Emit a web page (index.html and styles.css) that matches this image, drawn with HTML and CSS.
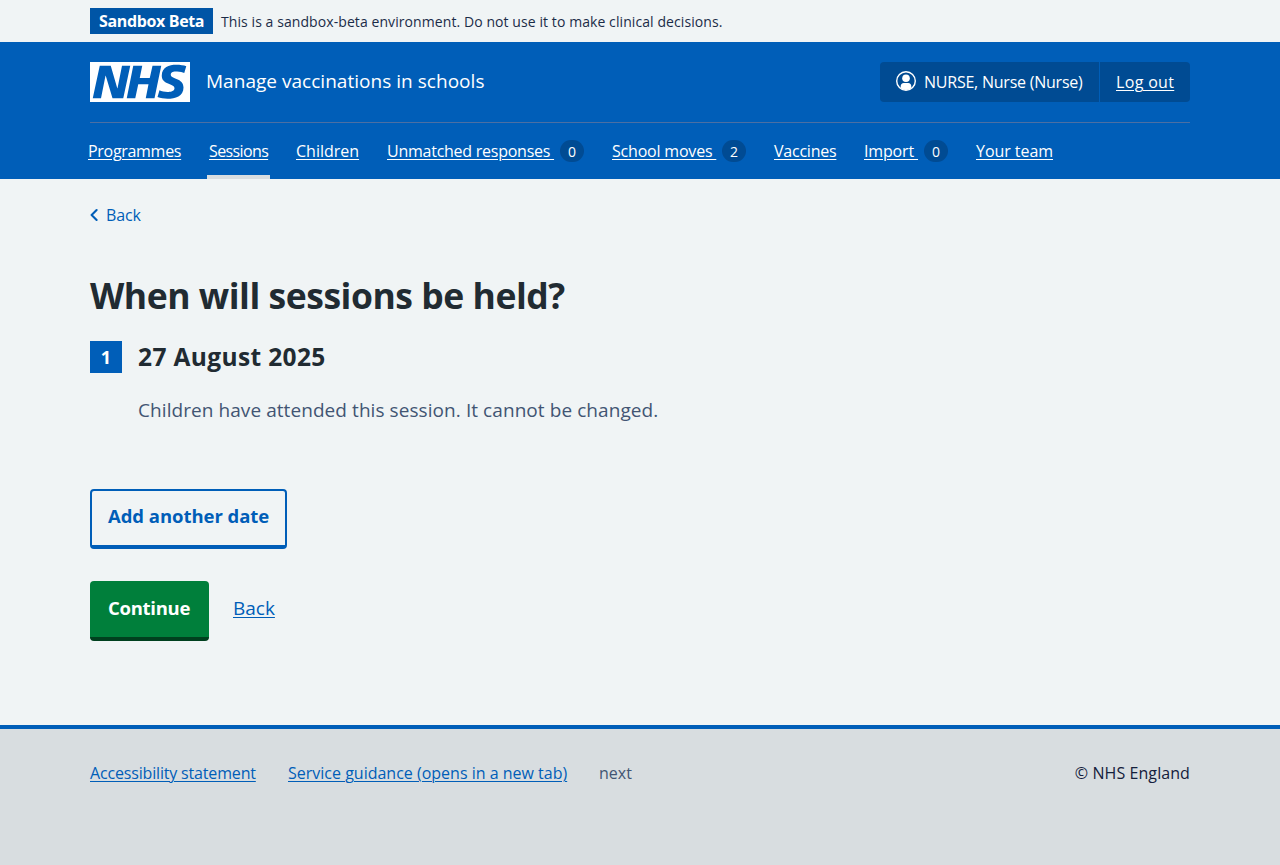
FILE: index.html
```html
<!DOCTYPE html>
<html lang="en">
<head>
<meta charset="utf-8">
<title>When will sessions be held?</title>
<link rel="stylesheet" href="styles.css">
</head>
<body>
<div class="environment"><div class="container environment-inner">
  <strong class="tag"><span>Sandbox Beta</span></strong><span class="environment-text">This is a sandbox-beta environment. Do not use it to make clinical decisions.</span>
</div></div>
<header class="header"><div class="container">
  <div class="header-top">
    <a class="service" href="#">
      <svg class="logo" viewBox="0 0 40 16" role="img" aria-label="NHS"><path fill="#fff" d="M0 0h40v16H0z"/><path fill="#005eb8" d="M3.9 1.5h4.4l2.6 9h.1l1.8-9h3.3l-2.8 13H9l-2.7-9h-.1l-1.8 9H1.1M17.3 1.5h3.6l-1 4.9h4L25 1.5h3.5l-2.7 13h-3.5l1.1-5.6h-4.1l-1.2 5.6h-3.4M37.7 4.4c-.7-.3-1.6-.6-2.9-.6-1.4 0-2.5.2-2.5 1.3 0 1.8 5.1 1.2 5.1 5.1 0 3.6-3.3 4.5-6.4 4.5-1.3 0-2.9-.3-4-.7l.8-2.7c.7.4 2.1.7 3.2.7s2.8-.2 2.8-1.5c0-2.1-5.1-1.3-5.1-5 0-3.4 2.9-4.4 5.8-4.4 1.6 0 3.1.2 4 .6"/></svg>
      <span class="service-name">Manage vaccinations in schools</span>
    </a>
    <div class="account">
      <div class="account-user">
        <svg class="user-icon" viewBox="0 0 20 20" aria-hidden="true"><circle cx="10" cy="10" r="9.3" fill="none" stroke="#fff" stroke-width="1.4"/><circle cx="10" cy="7.3" r="3.8" fill="#fff"/><path fill="#fff" d="M4.7 17v-1.8c0-1.900 1.200-3.200 3.100-3.200h4.400c1.900 0 3.100 1.300 3.100 3.200V17c-1.500 1.200-3.200 2-5.300 2s-3.800-.8-5.300-2z"/></svg>
        <span class="account-name">NURSE, Nurse (Nurse)</span>
      </div>
      <div class="account-out"><a class="logout" href="#">Log out</a></div>
    </div>
  </div>
  <nav class="nav">
    <a class="nav-link programmes" href="#"><span>Programmes</span></a>
    <a class="nav-link sessions current" href="#"><span>Sessions</span></a>
    <a class="nav-link children" href="#"><span>Children</span></a>
    <a class="nav-link unmatched" href="#"><span>Unmatched responses </span><b class="count">0</b></a>
    <a class="nav-link moves" href="#"><span>School moves </span><b class="count">2</b></a>
    <a class="nav-link vaccines" href="#"><span>Vaccines</span></a>
    <a class="nav-link import" href="#"><span>Import </span><b class="count">0</b></a>
    <a class="nav-link team" href="#"><span>Your team</span></a>
  </nav>
</div></header>
<main class="container main">
  <a class="back" href="#"><svg class="chevron" viewBox="0 0 8 14" aria-hidden="true"><path d="M6.600 2 1.600 7l5 5" fill="none" stroke="#005eb8" stroke-width="2.100" stroke-linecap="round" stroke-linejoin="round"/></svg><span class="back-text">Back</span></a>
  <h1 class="title">When will sessions be held?</h1>
  <div class="date-row"><span class="number">1</span><h2 class="date">27 August 2025</h2></div>
  <p class="hint"><span>Children have attended this session. It cannot be changed.</span></p>
  <button class="button secondary"><span>Add another date</span></button>
  <div class="actions"><button class="button primary"><span>Continue</span></button><a class="cancel" href="#">Back</a></div>
</main>
<footer class="footer"><div class="container footer-inner">
  <a class="statement" href="#">Accessibility statement</a><a class="guidance" href="#">Service guidance (opens in a new tab)</a><span class="version">next</span>
  <span class="copyright">© NHS England</span>
</div></footer>
</body>
</html>
```
FILE: styles.css
```css
* { box-sizing: border-box; }
body { margin: 0; min-height: 865px; display: flex; flex-direction: column; background: #f0f4f5; color: #212b32; font: 16px/24px "Open Sans", "Noto Sans", sans-serif; white-space: nowrap; }
.container { width: 1100px; margin: 0 auto; }
.environment { height: 42px; padding-top: 8px; }
.environment-inner { display: flex; align-items: flex-start; gap: 8px; }
.tag { width: 123px; height: 26px; padding-left: 9px; background: #0055a6; color: #fff; font-weight: 700; line-height: 26px; letter-spacing: -.35px; }
.environment-text { color: #1b2c48; font-size: 14px; line-height: 28px; letter-spacing: .08px; }
.header { height: 137px; background: #005eb8; color: #fff; }
.header-top { height: 81px; padding: 20px 0; display: flex; justify-content: space-between; border-bottom: 1px solid #4c6fa3; }
.service { display: flex; gap: 16px; color: #fff; text-decoration: none; }
.logo { width: 100px; height: 40px; }
.service-name { font-size: 19px; line-height: 38px; letter-spacing: .03px; }
.account { display: flex; width: 310px; height: 40px; line-height: 40px; background: #004b93; border-radius: 4px; }
.account-user { display: flex; width: 220px; padding-left: 16px; gap: 8px; border-right: 1px solid #005eb8; }
.user-icon { width: 20px; height: 20px; margin-top: 9px; }
.account-name { letter-spacing: -.23px; }
.account-out { padding-left: 16px; }
.logout { color: #fff; letter-spacing: .33px; }
a { text-underline-offset: 2px; text-decoration-thickness: 1px; color: #005eb8; }
.nav { display: flex; gap: 24px; height: 56px; margin-left: -4px; }
.nav-link { display: flex; height: 56px; padding: 0 2px; color: #fff; line-height: 56px; text-decoration: none; }
.nav-link span { text-decoration: underline; white-space: pre; }
.current { border-bottom: 4px solid #d8dde0; }
.count { width: 24px; height: 22px; margin: 17px 0 0 auto; border-radius: 12px; background: #004b93; text-align: center; font-size: 14px; line-height: 23px; font-weight: 400; letter-spacing: 0; }
.programmes { width: 97px; letter-spacing: -.3px; }
.sessions { width: 63px; letter-spacing: -.62px; }
.children { width: 67px; letter-spacing: 0; }
.unmatched { width: 201px; letter-spacing: -.25px; }
.moves { width: 138px; letter-spacing: -.2px; }
.vaccines { width: 66px; letter-spacing: -.23px; }
.import { width: 88px; letter-spacing: -.15px; }
.team { width: 81px; letter-spacing: -.05px; }
.main { height: 546px; padding-top: 24px; display: flex; flex-direction: column; align-items: flex-start; }
.back { display: flex; align-items: center; gap: 8px; text-decoration: none; height: 24px; }
.chevron { width: 8px; height: 14px; }
.back-text { letter-spacing: -.1px; }
.title { margin: 41px 0 18px; font-size: 35.5px; line-height: 54px; font-weight: 700; letter-spacing: -.47px; }
.date-row { display: flex; gap: 16px; height: 32px; margin-top: 1px; }
.number { width: 32px; height: 32px; background: #005eb8; color: #fff; text-align: center; line-height: 32px; font-weight: 700; font-size: 18px; }
.date { margin: 0; font-size: 24.5px; line-height: 32px; letter-spacing: .37px; }
.hint { margin: 23px 0 0 48px; color: #425573; font-size: 19px; line-height: 28px; letter-spacing: .07px; }
.button { height: 60px; border: 0; border-radius: 4px; padding: 0 18px 4px; font: 700 18.5px/28px "Open Sans", sans-serif; text-align: left; white-space: nowrap; }
.secondary { width: 197px; margin-top: 65px; border: 2px solid #005eb8; border-bottom-width: 4px; padding: 0 16px 4px; color: #005eb8; background: transparent; letter-spacing: -.05px; }
.primary { width: 119px; background: #007f3b; border-bottom: 4px solid #00401e; padding-bottom: 3px; color: #fff; letter-spacing: -.27px; }
.actions { display: flex; margin-top: 32px; gap: 24px; }
.cancel { font-size: 19px; line-height: 54px; }
.footer { flex: 1; border-top: 4px solid #005eb8; background: #d8dde0; }
.footer-inner { display: flex; gap: 32px; padding-top: 32px; }
.statement { width: 166px; letter-spacing: -.17px; }
.guidance { width: 279px; letter-spacing: 0; }
.version { color: #425573; }
.copyright { color: #14203c; margin-left: auto; letter-spacing: .08px; }
```
